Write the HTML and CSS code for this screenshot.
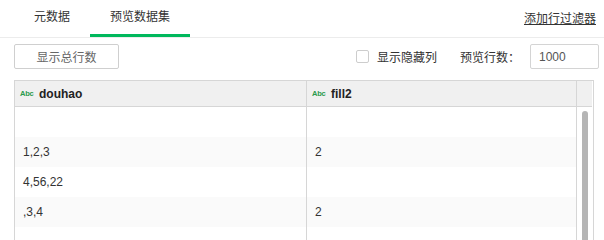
FILE: index.html
```html
<!DOCTYPE html>
<html lang="zh">
<head>
<meta charset="utf-8">
<link rel="stylesheet" href="styles.css">
</head>
<body>
<div class="tabs">
  <div class="tab">元数据</div>
  <div class="tab active">预览数据集</div>
  <a class="filter-link" href="#">添加行过滤器</a>
</div>
<div class="toolbar">
  <button class="btn">显示总行数</button>
  <label class="check"><span class="box"></span><span>显示隐藏列</span></label>
  <span class="rows-label">预览行数：</span>
  <input class="num" type="text" value="1000">
</div>
<div class="grid">
  <div class="data">
    <div class="row head">
      <div class="cell"><span class="type">Abc</span><span class="name">douhao</span></div>
      <div class="cell"><span class="type">Abc</span><span class="name">fill2</span></div>
    </div>
    <div class="row"><div class="cell"></div><div class="cell"></div></div>
    <div class="row odd"><div class="cell">1,2,3</div><div class="cell">2</div></div>
    <div class="row"><div class="cell">4,56,22</div><div class="cell"></div></div>
    <div class="row odd"><div class="cell">,3,4</div><div class="cell">2</div></div>
    <div class="row fill"><div class="cell"></div><div class="cell"></div></div>
  </div>
  <div class="scroll">
    <div class="scroll-head"></div>
    <div class="track"><div class="thumb"></div></div>
  </div>
</div>
</body>
</html>
```
FILE: styles.css
```css
* { box-sizing: border-box; }
html, body { margin: 0; padding: 0; }
body {
  width: 604px;
  height: 240px;
  overflow: hidden;
  background: #fff;
  font-family: "Noto Sans CJK SC", "Liberation Sans", sans-serif;
  font-size: 12px;
  color: #333;
}
.tabs {
  display: flex;
  height: 38px;
  padding-left: 14px;
  padding-right: 8px;
  border-bottom: 1px solid #ececec;
}
.tab {
  height: 37px;
  padding: 0 20px;
  line-height: 32px;
  border-bottom: 3px solid transparent;
  color: #333;
}
.tab.active { border-bottom-color: #00b85c; }
.filter-link {
  margin-left: auto;
  line-height: 36px;
  color: #333;
  text-decoration: underline;
}
.toolbar {
  display: flex;
  align-items: flex-start;
  padding: 6px 5px 0 14px;
  height: 31px;
}
.btn {
  width: 105px;
  height: 25px;
  border: 1px solid #cfcfcf;
  border-radius: 2px;
  background: #fff;
  font-family: "Noto Sans CJK SC", sans-serif;
  font-size: 12px;
  color: #666;
  padding: 0;
  margin: 0;
}
.check {
  margin-left: auto;
  display: flex;
  align-items: center;
  gap: 8px;
  height: 25px;
  color: #333;
}
.box {
  width: 13px;
  height: 13px;
  border: 1px solid #cdcdcd;
  border-radius: 2px;
  background: #fff;
}
.rows-label {
  margin-left: 23px;
  line-height: 25px;
  color: #333;
}
.num {
  margin-left: 10px;
  width: 69px;
  height: 25px;
  border: 1px solid #d4d4d4;
  border-radius: 2px;
  padding: 0 0 0 8px;
  font-family: "Liberation Sans", sans-serif;
  font-size: 12px;
  color: #555;
  outline: none;
}
.grid {
  margin: 11px 10px 0 14px;
  display: flex;
  border: 1px solid #d6d6d6;
  border-bottom: none;
  height: 160px;
  overflow: hidden;
}
.data {
  width: 562px;
  border-right: 1px solid #d6d6d6;
  display: flex;
  flex-direction: column;
}
.row {
  display: grid;
  grid-template-columns: 292px 270px;
  height: 30px;
  flex: none;
  font-family: "Liberation Sans", sans-serif;
  font-size: 12px;
  color: #333;
}
.row.fill { flex: 1; }
.row.odd { background: #fafafa; }
.row .cell {
  display: flex;
  align-items: center;
  padding-left: 8px;
}
.row .cell:first-child { border-right: 1px solid #d6d6d6; }
.row.head {
  height: 26px;
  background: #f0f0f0;
  border-bottom: 1px solid #d6d6d6;
}
.row.head .cell { padding-left: 5px; }
.type {
  font-size: 7.5px;
  font-weight: bold;
  color: #2b9a4c;
  width: 13px;
  margin-right: 6px;
  letter-spacing: -0.2px;
}
.name {
  font-weight: bold;
  color: #222;
  font-size: 12px;
}
.scroll { width: 15px; }
.scroll-head {
  height: 26px;
  background: #f0f0f0;
  border-bottom: 1px solid #d6d6d6;
}
.track {
  padding: 4px 0 0 5px;
}
.thumb {
  width: 6px;
  height: 200px;
  background: #b5b5b5;
  border-radius: 3px;
}
```
